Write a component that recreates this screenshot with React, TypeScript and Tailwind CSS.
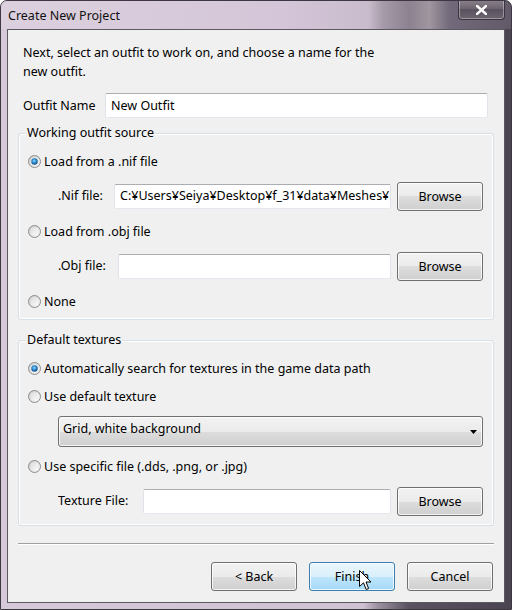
import React from "react";

function Radio({ checked }: { checked?: boolean }) {
  return (
    <svg width="13" height="13" viewBox="0 0 13 13" className="shrink-0">
      <defs>
        <linearGradient id="rOuter" x1="0" y1="0" x2="1" y2="1">
          <stop offset="0" stopColor="#c9c9c9" />
          <stop offset="1" stopColor="#f8f8f8" />
        </linearGradient>
        <linearGradient id="rInner" x1="0" y1="0" x2="1" y2="1">
          <stop offset="0" stopColor="#dcdcdc" />
          <stop offset="1" stopColor="#fbfbfb" />
        </linearGradient>
        <radialGradient id="rDot" cx="0.45" cy="0.4" r="0.65">
          <stop offset="0" stopColor="#9fdcf8" />
          <stop offset="0.45" stopColor="#2d8fd7" />
          <stop offset="1" stopColor="#0e3f70" />
        </radialGradient>
      </defs>
      <circle cx="6.5" cy="6.5" r="6" fill="url(#rOuter)" stroke="#8d8d8d" strokeWidth="1" />
      <circle cx="6.5" cy="6.5" r="4.3" fill="url(#rInner)" />
      {checked && <circle cx="6.5" cy="6.5" r="3.2" fill="url(#rDot)" />}
    </svg>
  );
}

function Btn({ children, hot }: { children: React.ReactNode; hot?: boolean }) {
  return (
    <div
      className={
        hot
          ? "w-[86px] h-[29px] shrink-0 rounded-[3px] border border-[#3c7fb1] bg-[linear-gradient(#eaf6fd_0%,#d9f0fc_50%,#bee6fd_50%,#a7d9f5_100%)] shadow-[inset_0_0_0_1px_rgba(255,255,255,0.75)] flex items-center justify-center pt-[2px] text-[12.5px] text-black"
          : "w-[86px] h-[29px] shrink-0 rounded-[3px] border border-[#707070] bg-[linear-gradient(#f2f2f2_0%,#ebebeb_50%,#dddddd_50%,#cfcfcf_100%)] shadow-[inset_0_0_0_1px_rgba(255,255,255,0.75)] flex items-center justify-center pt-[2px] text-[12.5px] text-black"
      }
    >
      {children}
    </div>
  );
}

function TextBox({ value }: { value?: string }) {
  return (
    <div className="flex-1 min-w-0 h-[25px] bg-white border border-[#e2e3ea] border-t-[#abadb3] border-b-[#e3e9ef] rounded-[2px] flex items-center pl-[5px] pt-[1px] overflow-hidden whitespace-nowrap text-[12.5px] text-black">
      {value}
    </div>
  );
}

function Group({ label, children, className }: { label: string; children: React.ReactNode; className: string }) {
  return (
    <div className={"relative mx-[10px] border border-[#d5dfe5] rounded-[3px] shadow-[inset_0_0_0_1px_#ffffff] flex flex-col " + className}>
      <div className="absolute left-[7px] top-[-10px] px-[1px] bg-[#f0f0f0] leading-[17px] text-[12.5px] text-black">
        {label}
      </div>
      {children}
    </div>
  );
}

function RadioRow({ label, checked, className }: { label: string; checked?: boolean; className?: string }) {
  return (
    <div className={"h-[20px] flex items-center pl-[9px] gap-[3px] " + (className || "")}>
      <Radio checked={checked} />
      <span className="text-[12.5px] text-black pt-[2px]">{label}</span>
    </div>
  );
}

export default function App() {
  return (
    <div className="w-[512px] h-[610px] relative rounded-t-[7px] border border-[#3d3742] bg-[linear-gradient(to_right,#d6c9d9_0%,#cfc2d3_71%,#9a8f9d_74%,#5a5260_80%,#4a4350_100%)] flex flex-col font-['Noto_Sans',sans-serif] overflow-hidden">
      {/* title bar */}
      <div className="h-[28px] shrink-0 flex items-start justify-between rounded-t-[6px] bg-[linear-gradient(to_right,#dcd0de_0%,#d4c6d8_55%,#c9bccd_72%,#a59aa7_75%,#8c8290_80%,#a096a0_84%,#72697a_88%,#625a68_100%)]">
        <div className="pl-[7px] pt-[6px] text-[12.5px] leading-[17px] text-[#111]">Create New Project</div>
        <div className="-mt-[1px] mr-[6px] w-[47px] h-[20px] rounded-b-[4px] border border-[#3a3440] border-t-0 shadow-[inset_0_0_0_1px_rgba(255,255,255,0.35)] bg-[linear-gradient(#8a808c,#6a626e_50%,#5a525e_50%,#6c6470)] flex items-center justify-center">
          <svg width="11" height="10" viewBox="0 0 11 10">
            <path d="M1 1 L10 9 M10 1 L1 9" stroke="#ffffff" strokeWidth="2.4" strokeLinecap="square" />
          </svg>
        </div>
      </div>

      {/* client */}
      <div className="mx-[6px] mb-[6px] flex-1 border border-[#5b5860] bg-[#f0f0f0] flex flex-col text-[12.5px] text-black">
        <div className="pt-[13px] pl-[15px] leading-[19px]">
          Next, select an outfit to work on, and choose a name for the
          <br />
          new outfit.
        </div>

        <div className="mt-[12px] h-[25px] flex items-center pl-[15px] pr-[16px]">
          <span className="w-[82px] shrink-0 pt-[1px]">Outfit Name</span>
          <TextBox value="New Outfit" />
        </div>

        <Group label="Working outfit source" className="mt-[15px] pt-[17px] pb-[8px]">
          <RadioRow label="Load from a .nif file" checked />
          <div className="mt-[10px] h-[30px] flex items-center pl-[39px] pr-[10px]">
            <span className="w-[56px] shrink-0 pt-[1px]">.Nif file:</span>
            <TextBox value="C:¥Users¥Seiya¥Desktop¥f_31¥data¥Meshes¥" />
            <div className="ml-[6px]">
              <Btn>Browse</Btn>
            </div>
          </div>
          <RadioRow label="Load from .obj file" className="mt-[10px]" />
          <div className="mt-[10px] h-[30px] flex items-center pl-[39px] pr-[10px]">
            <span className="w-[60px] shrink-0 pt-[1px]">.Obj file:</span>
            <TextBox />
            <div className="ml-[6px]">
              <Btn>Browse</Btn>
            </div>
          </div>
          <RadioRow label="None" className="mt-[10px]" />
        </Group>

        <Group label="Default textures" className="mt-[20px] pt-[17px] pb-[9px]">
          <RadioRow label="Automatically search for textures in the game data path" checked />
          <RadioRow label="Use default texture" className="mt-[8px]" />
          <div className="mt-[10px] pl-[39px] pr-[10px]">
            <div className="h-[31px] rounded-[3px] border border-[#707070] bg-[linear-gradient(#f2f2f2_0%,#ebebeb_50%,#dddddd_50%,#cfcfcf_100%)] shadow-[inset_0_0_0_1px_rgba(255,255,255,0.75)] flex items-center justify-between pl-[4px] pr-[5px]">
              <span className="-mt-[5px]">Grid, white background</span>
              <svg width="7" height="4" viewBox="0 0 7 4">
                <path d="M0 0 H7 L3.5 4 Z" fill="#000" />
              </svg>
            </div>
          </div>
          <RadioRow label="Use specific file (.dds, .png, or .jpg)" className="mt-[9px]" />
          <div className="mt-[10px] h-[30px] flex items-center pl-[39px] pr-[10px]">
            <span className="w-[85px] shrink-0 pt-[1px]">Texture File:</span>
            <TextBox />
            <div className="ml-[6px]">
              <Btn>Browse</Btn>
            </div>
          </div>
        </Group>

        <div className="mt-[17px] mx-[10px] h-0 border-t border-t-[#a0a0a0] border-b border-b-white" />

        <div className="mt-[17px] flex justify-end gap-[12px] pr-[11px]">
          <Btn>&lt; Back</Btn>
          <Btn hot>Finish</Btn>
          <Btn>Cancel</Btn>
        </div>
      </div>

      {/* mouse cursor */}
      <svg className="absolute left-[358px] top-[569px]" width="13" height="21" viewBox="0 0 13 21">
        <path d="M0.5 0.5 L0.5 16.5 L4.5 12.8 L7.2 19.5 L9.6 18.5 L7 12 L12 12 Z" fill="#ffffff" stroke="#000000" strokeWidth="1" strokeLinejoin="miter" />
      </svg>
    </div>
  );
}
